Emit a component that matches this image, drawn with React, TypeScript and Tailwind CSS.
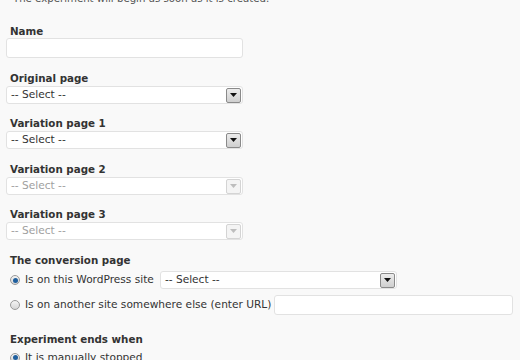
import type { ReactNode } from 'react';

const FONT = 'font-["DejaVu_Sans",Verdana,sans-serif]';

function Arrow({ disabled }: { disabled?: boolean }) {
  return (
    <span
      className={`flex h-[15px] w-[15px] items-center justify-center rounded-[2px] border ${
        disabled
          ? 'border-[#d4d4d4] bg-[#f4f4f4]'
          : 'border-[#8a8a8a] bg-gradient-to-b from-[#ececec] to-[#cfcfcf]'
      }`}
    >
      <svg width="7" height="4" viewBox="0 0 7 4">
        <path d="M0 0h7L3.5 4z" fill={disabled ? '#bdbdbd' : '#111'} />
      </svg>
    </span>
  );
}

function Select({ disabled }: { disabled?: boolean }) {
  return (
    <div
      className={`flex h-[18px] w-[237px] shrink-0 items-center justify-between rounded-[3px] border border-[#e2e2e2] bg-white pl-[4px] pr-[1px] text-[10.6px] ${
        disabled ? 'text-[#a0a0a0]' : 'text-[#333]'
      }`}
    >
      <span>-- Select --</span>
      <Arrow disabled={disabled} />
    </div>
  );
}

function Label({ children }: { children: ReactNode }) {
  return (
    <div className="h-[14px] whitespace-nowrap pl-[4px] text-[10.3px] font-bold leading-[14px] text-[#333]">
      {children}
    </div>
  );
}

function Radio({ checked }: { checked?: boolean }) {
  return (
    <span className="flex h-[10px] w-[10px] shrink-0 items-center justify-center rounded-full border border-[#9a9a9a] bg-gradient-to-b from-[#f4f4f4] to-[#d6d6d6]">
      {checked && <span className="h-[5px] w-[5px] rounded-full bg-[#1f5f9e]" />}
    </span>
  );
}

export default function App() {
  return (
    <div className={`h-[360px] w-[520px] overflow-hidden bg-[#f9f9f9] px-[6px] ${FONT}`}>
      <div className="mt-[-7px] h-[12px] whitespace-nowrap text-[10.2px] leading-[12px] text-[#555]">
        - The experiment will begin as soon as it is created.
      </div>

      <div className="mt-[19px]">
        <Label>Name</Label>
        <div className="h-[20px] w-[237px] rounded-[3px] border border-[#e2e2e2] bg-white" />
      </div>

      <div className="mt-[13px]">
        <Label>Original page</Label>
        <div className="mt-[1px]">
          <Select />
        </div>
      </div>

      <div className="mt-[12px]">
        <Label>Variation page 1</Label>
        <div className="mt-[1px]">
          <Select />
        </div>
      </div>

      <div className="mt-[13px]">
        <Label>Variation page 2</Label>
        <div className="mt-[1px]">
          <Select disabled />
        </div>
      </div>

      <div className="mt-[12px]">
        <Label>Variation page 3</Label>
        <div className="mt-[1px]">
          <Select disabled />
        </div>
      </div>

      <div className="mt-[13px]">
        <Label>The conversion page</Label>
        <div className="mt-[4px] flex items-center gap-[5px] whitespace-nowrap pl-[4px] text-[10.6px] text-[#333]">
          <Radio checked />
          <span className="mr-[1px]">Is on this WordPress site</span>
          <Select />
        </div>
        <div className="mt-[6px] flex items-center gap-[5px] whitespace-nowrap pl-[4px] text-[10.6px] text-[#333]">
          <Radio />
          <span className="mr-[-2px]">Is on another site somewhere else (enter URL)</span>
          <div className="h-[20px] w-[239px] shrink-0 rounded-[3px] border border-[#e2e2e2] bg-white" />
        </div>
      </div>

      <div className="mt-[17px]">
        <Label>Experiment ends when</Label>
        <div className="mt-[4px] flex items-center gap-[5px] whitespace-nowrap pl-[4px] text-[10.6px] text-[#333]">
          <Radio checked />
          <span>It is manually stopped</span>
        </div>
      </div>
    </div>
  );
}
